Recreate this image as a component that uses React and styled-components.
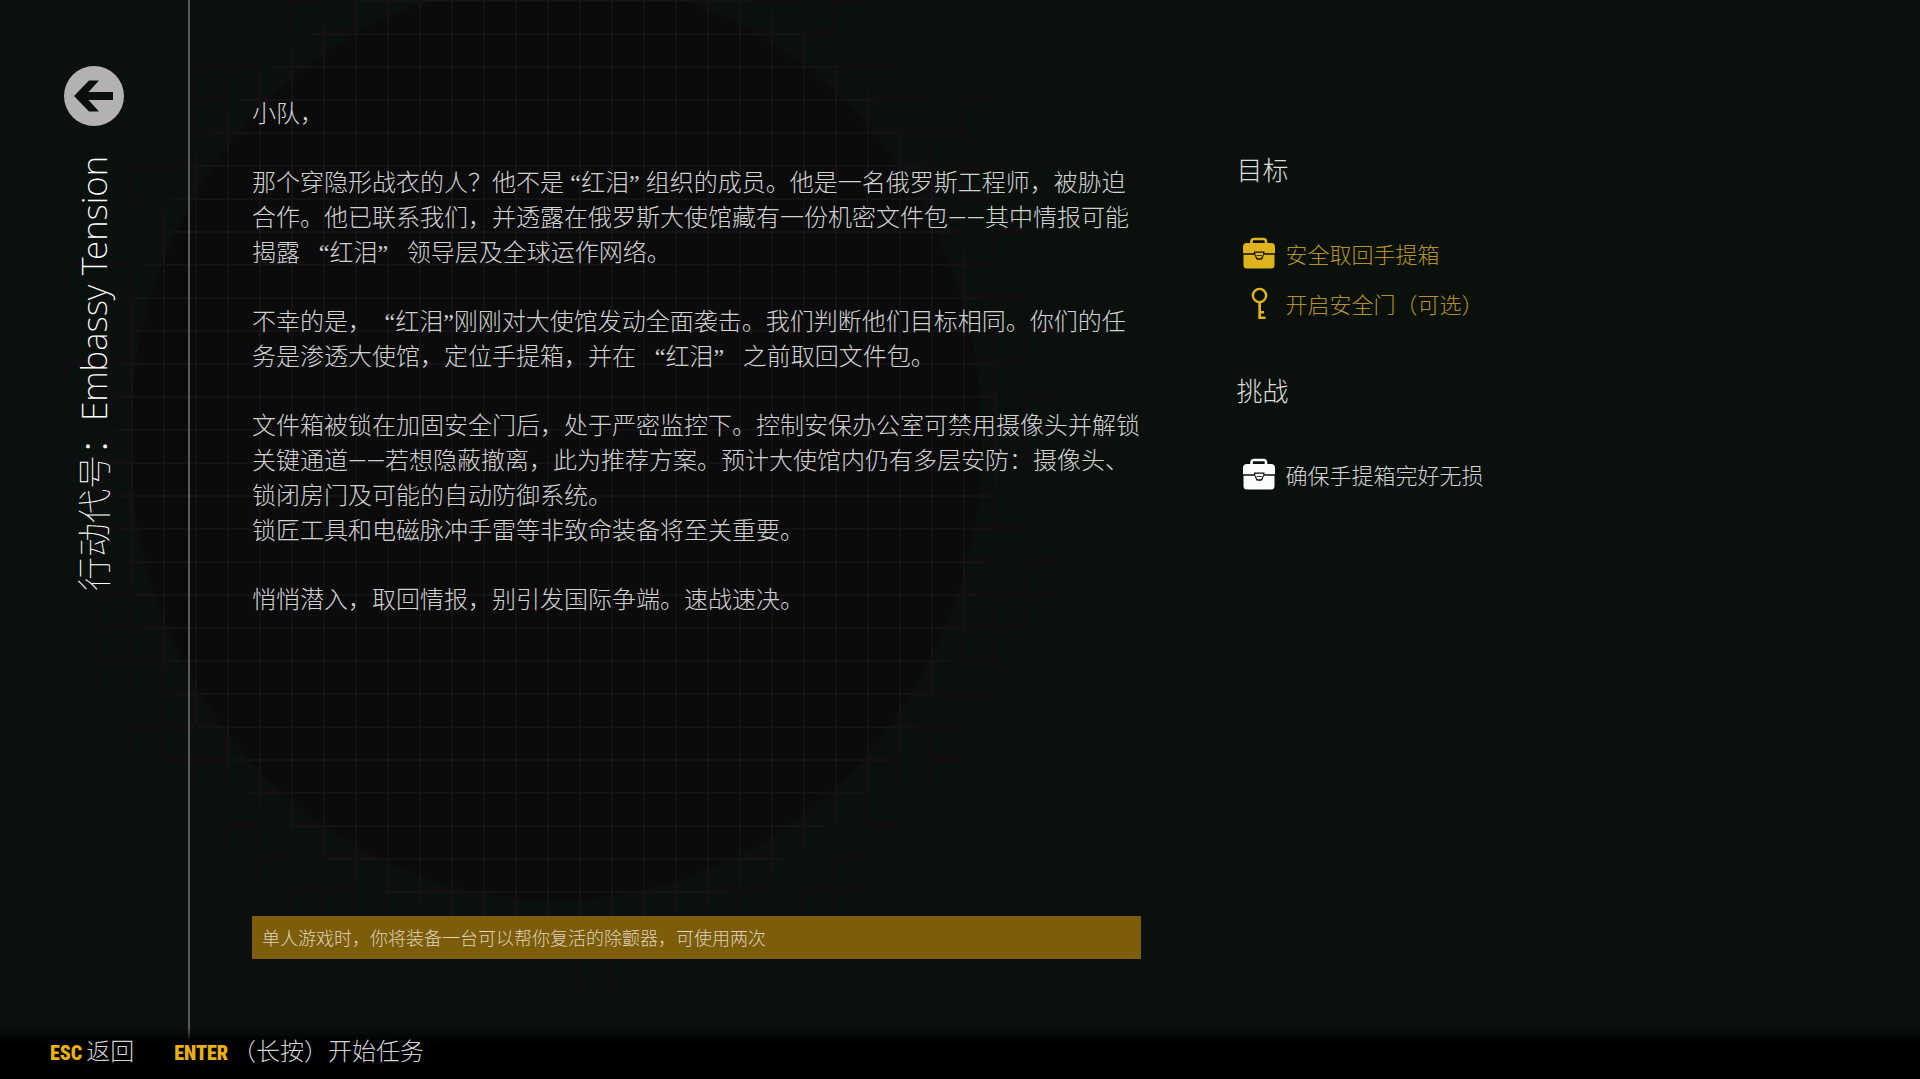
import styled, { createGlobalStyle } from 'styled-components';

const cjk = '"Noto Sans CJK SC", sans-serif';
const mixed = `"Noto Sans", ${cjk}`;

const briefing = [
  ['小队，'],
  [
    '那个穿隐形战衣的人？他不是 “红泪” 组织的成员。他是一名俄罗斯工程师，被胁迫',
    '合作。他已联系我们，并透露在俄罗斯大使馆藏有一份机密文件包——其中情报可能',
    '揭露   “红泪”   领导层及全球运作网络。',
  ],
  [
    '不幸的是，  “红泪”刚刚对大使馆发动全面袭击。我们判断他们目标相同。你们的任',
    '务是渗透大使馆，定位手提箱，并在   “红泪”   之前取回文件包。',
  ],
  [
    '文件箱被锁在加固安全门后，处于严密监控下。控制安保办公室可禁用摄像头并解锁',
    '关键通道——若想隐蔽撤离，此为推荐方案。预计大使馆内仍有多层安防：摄像头、',
    '锁闭房门及可能的自动防御系统。',
    '锁匠工具和电磁脉冲手雷等非致命装备将至关重要。',
  ],
  ['悄悄潜入，取回情报，别引发国际争端。速战速决。'],
];

const sections = [
  {
    title: '目标',
    color: '#b8902a',
    iconColor: '#dfb31e',
    items: [
      { icon: 'case', text: '安全取回手提箱' },
      { icon: 'key', text: '开启安全门（可选）' },
    ],
  },
  {
    title: '挑战',
    color: '#d2d2d2',
    iconColor: '#fbfafc',
    items: [{ icon: 'case', text: '确保手提箱完好无损' }],
  },
];

// grid lines that fray out past the edge of the dark disc
const CELL_W = 32;
const CELL_H = 33;
const frayed = [];
for (let col = 0; col < 36; col++) {
  for (let row = 0; row < 31; row++) {
    const x = 3 + col * CELL_W;
    const y = row * CELL_H;
    const d = Math.hypot(x - 552, (y - 440) * 0.92);
    const noise = Math.abs(Math.sin(col * 12.9 + row * 78.2) * 43758.5) % 1;
    if (d > 400 && d < 440 + noise * 80) {
      frayed.push(noise > 0.4 ? `M${x} ${y}h${CELL_W}` : `M${x} ${y}v${CELL_H}`);
      if (noise > 0.6) frayed.push(`M${x} ${y}v${CELL_H}`);
    }
  }
}

function Backdrop() {
  return (
    <BackdropSvg width="1200" height="1079" viewBox="0 0 1200 1079" aria-hidden="true">
      <defs>
        <pattern id="mesh" x="3" y="0" width={CELL_W} height={CELL_H} patternUnits="userSpaceOnUse">
          <path d="M0 1H32M1 0V33" stroke="#131315" strokeWidth="2" />
        </pattern>
      </defs>
      <path d={frayed.join('')} stroke="#100e10" strokeWidth="6" fill="none" />
      <ellipse cx="556" cy="440" rx="426" ry="460" fill="#0b0b0b" />
      <ellipse cx="556" cy="440" rx="442" ry="490" fill="url(#mesh)" />
    </BackdropSvg>
  );
}

function ArrowIcon() {
  return (
    <svg width="60" height="60" viewBox="0 0 60 60" aria-hidden="true">
      <path d="M10 30 25 14.500H35L24.500 26H49V34H24.500L35 45.500H25Z" fill="#0a0f0c" />
    </svg>
  );
}

function CaseIcon() {
  return (
    <svg width="34" height="32" viewBox="0 0 34 32" aria-hidden="true">
      <path d="M9.500 7V4.500Q9.500 2 12 2H21.500Q24 2 24 4.500V7" fill="none" stroke="currentColor" strokeWidth="2.600" />
      <path d="M5 6H29Q33 6 33 10V16.300H22.500V14.500H12V16.300H1V10Q1 6 5 6Z" fill="currentColor" />
      <path d="M1.500 17.700H12.500L14 21.500Q14.500 22.700 15.500 22.700H19Q20 22.700 20.500 21.500L22 17.700H32.500V28Q32.500 31.500 29 31.500H5Q1.500 31.500 1.500 28Z" fill="currentColor" />
      <path d="M13.300 15.700H21.200V17.500L19.500 20.500Q19.200 21.200 18.500 21.200H16Q15.300 21.200 15 20.500L13.300 17.500Z" fill="currentColor" />
      <path d="M14.500 18.500H20" stroke="#0a110d" strokeWidth="0.800" />
    </svg>
  );
}

function KeyIcon() {
  return (
    <svg width="34" height="34" viewBox="0 0 34 34" aria-hidden="true">
      <circle cx="17.500" cy="9.500" r="6.600" fill="none" stroke="currentColor" strokeWidth="2.400" />
      <path d="M16.300 16H19V25H22V27.500H19V30.500H23.500V33H16.300Z" fill="currentColor" />
    </svg>
  );
}

// the Chinese font sets quotes and dashes full width, so they get their own
function renderText(text) {
  return text.split(/(——|[“”])/).map((part, i) => {
    if (part === '——') return <Dash key={i}>{part}</Dash>;
    if (part === '“' || part === '”') return <Quote key={i}>{part}</Quote>;
    return part;
  });
}

export default function App() {
  return (
    <Page lang="zh-CN">
      <GlobalStyle />
      <Backdrop />
      <Body>
        <Sidebar>
          <BackButton type="button" aria-label="返回">
            <ArrowIcon />
          </BackButton>
          <Title>行动代号：<Codename>Embassy Tension</Codename></Title>
        </Sidebar>
        <Main>
          <Brief>
            {briefing.map((lines) => (
              <Paragraph key={lines[0]}>
                {lines.map((line) => (
                  <Line key={line}>{renderText(line)}</Line>
                ))}
              </Paragraph>
            ))}
            <Notice>单人游戏时，你将装备一台可以帮你复活的除颤器，可使用两次</Notice>
          </Brief>
          <Goals>
            {sections.map((section) => (
              <Section key={section.title}>
                <SectionTitle>{section.title}</SectionTitle>
                <GoalList>
                  {section.items.map((item) => (
                    <Goal key={item.text} $color={section.color}>
                      <GoalIcon $color={section.iconColor}>
                        {item.icon === 'key' ? <KeyIcon /> : <CaseIcon />}
                      </GoalIcon>
                      {item.text}
                    </Goal>
                  ))}
                </GoalList>
              </Section>
            ))}
          </Goals>
        </Main>
      </Body>
      <Footer>
        <Hint type="button">
          <Key>ESC</Key>返回
        </Hint>
        <Hint type="button">
          <Key>ENTER</Key>（长按）开始任务
        </Hint>
      </Footer>
    </Page>
  );
}

const GlobalStyle = createGlobalStyle`
  * {
    box-sizing: border-box;
  }
  body {
    margin: 0;
    background: #0a110d;
  }
`;

const Page = styled.div`
  position: relative;
  min-height: 100vh;
  display: flex;
  flex-direction: column;
  overflow: hidden;
  background: #0a110d;
  color: #d2d2d2;
  font-family: ${cjk};
  font-weight: 300;
`;

const BackdropSvg = styled.svg`
  position: absolute;
  top: 0;
  left: 0;
`;

const Body = styled.div`
  position: relative;
  flex: 1;
  display: flex;
`;

const Sidebar = styled.aside`
  width: 190px;
  padding-top: 66px;
  display: flex;
  flex-direction: column;
  align-items: center;
  gap: 30px;
  border-right: 2px solid #5a5a5c;
`;

const BackButton = styled.button`
  width: 60px;
  height: 60px;
  padding: 0;
  border: none;
  border-radius: 50%;
  background: #b4b1b5;
  cursor: pointer;
`;

const Title = styled.h1`
  margin: 0;
  font-family: ${mixed};
  font-size: 34px;
  font-weight: 100;
  line-height: 48px;
  color: #fff;
  writing-mode: vertical-rl;
  text-orientation: sideways;
  transform: rotate(180deg);
  white-space: nowrap;
`;

const Codename = styled.span`
  font-size: 35px;
  font-weight: 200;
`;

const Main = styled.main`
  flex: 1;
  min-width: 0;
  padding: 95px 0 80px 62px;
  display: grid;
  grid-template-columns: 1.3fr 1fr;
  column-gap: 96px;
`;

const Brief = styled.section`
  display: flex;
  flex-direction: column;
`;

const Paragraph = styled.p`
  margin: 0 0 34px;
  font-family: ${mixed};
  font-size: 24px;
  line-height: 35px;
  white-space: pre-wrap;
`;

const Line = styled.span`
  display: block;
`;

const Quote = styled.span`
  font-family: "Liberation Serif", serif;
  line-height: 24px;
`;

const Dash = styled.span`
  font-family: Roboto, sans-serif;
  line-height: 24px;
`;

const Notice = styled.p`
  margin: auto 0 0;
  padding: 0 10px;
  font-size: 18px;
  line-height: 43px;
  color: #ded3bd;
  background: #7d5d09;
`;

const Goals = styled.aside`
  padding-top: 56px;
`;

const Section = styled.section`
  margin-bottom: 44px;
`;

const SectionTitle = styled.h2`
  margin: 0 0 41px;
  font-size: 26px;
  font-weight: 300;
  line-height: 36px;
  color: #dcdcdc;
`;

const GoalList = styled.ul`
  margin: 0;
  padding: 0;
  list-style: none;
`;

const Goal = styled.li`
  display: flex;
  align-items: center;
  gap: 10px;
  height: 50px;
  padding-left: 5px;
  font-size: 22px;
  color: ${(p) => p.$color};
`;

const GoalIcon = styled.span`
  display: flex;
  color: ${(p) => p.$color};
`;

const Footer = styled.footer`
  position: relative;
  margin-top: -12px;
  height: 52px;
  padding: 0 50px 8px;
  display: flex;
  align-items: center;
  gap: 40px;
  background: linear-gradient(transparent, #000 16px);
`;

const Hint = styled.button`
  display: flex;
  align-items: baseline;
  padding: 0;
  border: none;
  background: none;
  font-family: ${cjk};
  font-size: 24px;
  font-weight: 300;
  color: #d2d2d2;
  cursor: pointer;
`;

const Key = styled.kbd`
  margin-right: 4px;
  font-family: "Roboto Condensed", Roboto, sans-serif;
  font-size: 20px;
  font-weight: 900;
  color: #e8b10e;
`;
